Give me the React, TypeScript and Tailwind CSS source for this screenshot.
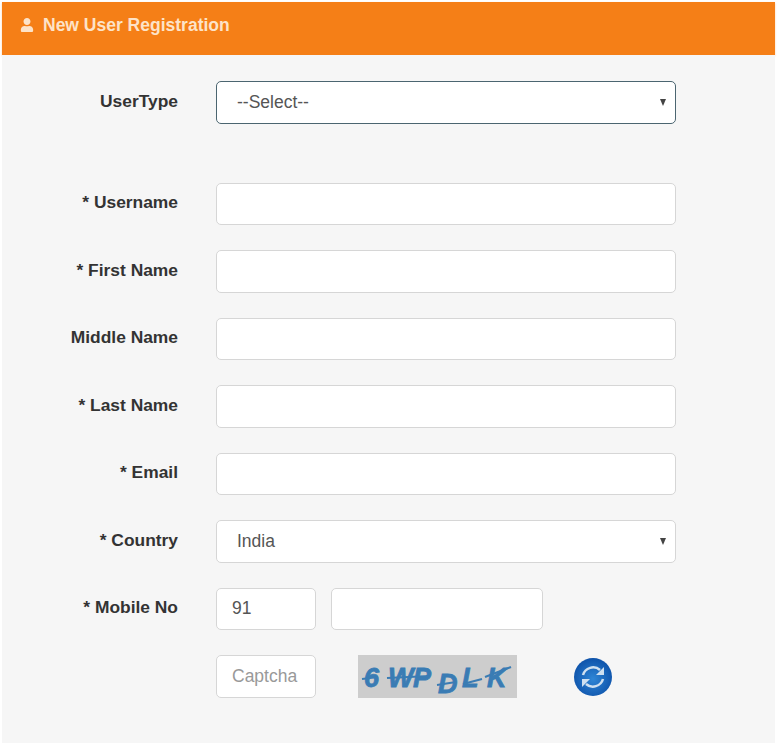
import { FaUser } from "react-icons/fa";

const inputClass =
  "h-[42.5px] rounded-[5px] border bg-white px-5 text-[17.5px] text-[#555] outline-none";

function Label({ text }: { text: string }) {
  return (
    <label className="w-[178px] shrink-0 pb-[3px] text-right text-[17.4px] font-bold text-[#333]">
      {text}
    </label>
  );
}

function SelectBox({ value, active }: { value: string; active?: boolean }) {
  return (
    <div className="relative ml-[38px] w-[460px]">
      <select
        defaultValue={value}
        className={`${inputClass} w-full appearance-none ${active ? "border-[#4b6570]" : "border-[#d6d6d6]"}`}
      >
        <option>{value}</option>
      </select>
      <span className="absolute right-[10px] top-[18px] h-0 w-0 border-x-[3.5px] border-t-[7px] border-x-transparent border-t-[#444]" />
    </div>
  );
}

function TextRow({ label }: { label: string }) {
  return (
    <div className="flex items-center">
      <Label text={label} />
      <input className={`${inputClass} ml-[38px] w-[460px] border-[#d6d6d6]`} />
    </div>
  );
}

function Captcha() {
  return (
    <svg width="159" height="43" viewBox="0 0 159 43" className="ml-[42px] bg-[#cdcdcd]">
      <g
        fill="#3a7cb4"
        stroke="#3a7cb4"
        strokeWidth="0.8"
        fontFamily="Liberation Sans, sans-serif"
        fontWeight="700"
        fontStyle="italic"
        fontSize="27"
      >
        <text x="6" y="32">6</text>
        <text x="30" y="32">W</text>
        <text x="55" y="32">P</text>
        <text x="80" y="38">D</text>
        <text x="104" y="32">L</text>
        <text x="129" y="32">K</text>
      </g>
      <g stroke="#3a7cb4" strokeWidth="2" fill="none">
        <line x1="4" y1="24" x2="20" y2="22" />
        <line x1="29" y1="23" x2="72" y2="21" />
        <line x1="79" y1="30" x2="98" y2="27" />
        <line x1="105" y1="29" x2="124" y2="24" />
        <line x1="127" y1="22" x2="153" y2="12" />
      </g>
    </svg>
  );
}

function RefreshIcon() {
  return (
    <svg width="40" height="42" viewBox="0 0 40 42" className="ml-[56px]">
      <defs>
        <radialGradient id="refreshBlue" cx="0.5" cy="0.55" r="0.6">
          <stop offset="0" stopColor="#2f86d6" />
          <stop offset="1" stopColor="#0b4ea6" />
        </radialGradient>
      </defs>
      <circle cx="20" cy="21" r="19" fill="url(#refreshBlue)" />
      <g fill="none" stroke="#cfe0f0" strokeWidth="2.5">
        <path d="M10 19a10.5 10.5 0 0 1 17-5" />
        <path d="M30 23a10.5 10.5 0 0 1-17 5" />
      </g>
      <path d="M31 11v8h-8z" fill="#cfe0f0" />
      <path d="M9 31v-8h8z" fill="#cfe0f0" />
    </svg>
  );
}

export default function App() {
  return (
    <div className="min-h-[746px] bg-white px-[2px] pt-[2px] font-['Liberation_Sans',sans-serif]">
      <div className="flex h-[53px] items-start gap-[9px] bg-[#f57f17] pl-[18px] pt-[10px] text-[17.5px] font-bold text-[#fde3c8] shadow-[0_1px_2px_rgba(245,127,23,0.35)]">
        <FaUser className="mt-[6px] h-[14px] w-[14px]" />
        <span>New User Registration</span>
      </div>
      <div className="h-[688px] bg-[#f6f6f6] pt-[26px]">
        <div className="-ml-[2px] flex items-center">
          <Label text="UserType" />
          <SelectBox value="--Select--" active />
        </div>
        <div className="-ml-[2px] mt-[59px] flex flex-col gap-[25px]">
          <TextRow label="* Username" />
          <TextRow label="* First Name" />
          <TextRow label="Middle Name" />
          <TextRow label="* Last Name" />
          <TextRow label="* Email" />
          <div className="flex items-center">
            <Label text="* Country" />
            <SelectBox value="India" />
          </div>
          <div className="flex items-center">
            <Label text="* Mobile No" />
            <input defaultValue="91" className={`${inputClass} ml-[38px] w-[100px] border-[#d6d6d6] px-[15px]`} />
            <input className={`${inputClass} ml-[15px] w-[212px] border-[#d6d6d6]`} />
          </div>
          <div className="flex items-center pl-[216px]">
            <input placeholder="Captcha" className={`${inputClass} w-[100px] border-[#d6d6d6] px-[15px] placeholder:text-[#999]`} />
            <Captcha />
            <RefreshIcon />
          </div>
        </div>
      </div>
    </div>
  );
}
